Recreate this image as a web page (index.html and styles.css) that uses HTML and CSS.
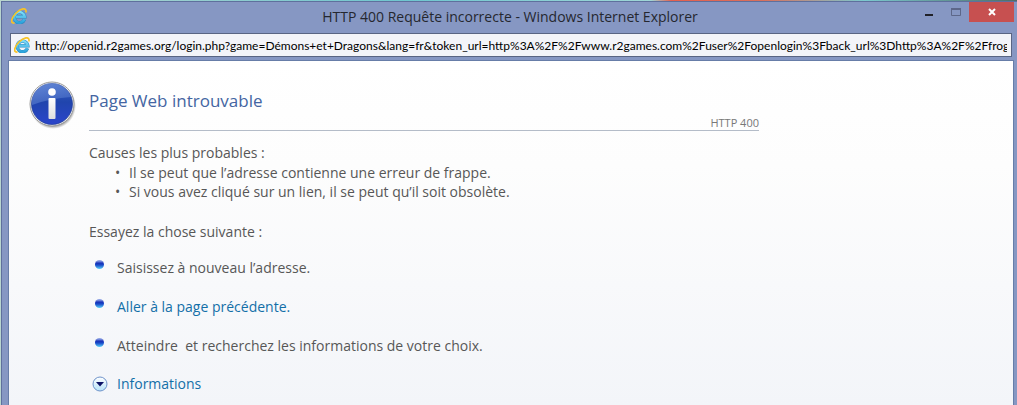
FILE: index.html
```html
<!DOCTYPE html>
<html lang="fr">
  <head>
    <meta charset="UTF-8" />
    <meta name="viewport" content="width=device-width, initial-scale=1.0" />
    <title>HTTP 400 Requête incorrecte</title>
    <link rel="stylesheet" href="styles.css">
  </head>
  <body>
    <svg class="symbols" width="0" height="0" aria-hidden="true">
      <defs>
        <linearGradient id="eBlue" x1="0" y1="0" x2="0" y2="1">
          <stop offset="0" stop-color="#7fdcf8" />
          <stop offset="1" stop-color="#2ba3dd" />
        </linearGradient>
        <symbol id="ie" viewBox="0 0 16 16">
          <path d="M13.500 11.300A5.300 5.300 0 1 1 13.800 8.800H5" fill="none" stroke="#2b8abf" stroke-width="3.4" />
          <path d="M13.500 11.300A5.300 5.300 0 1 1 13.800 8.800H5" fill="none" stroke="url(#eBlue)" stroke-width="2.5" />
          <path d="M3 15C-1 15.500 .5 9.500 5 5C9.500 .5 15.500-1 15 3.800" fill="none" stroke="#f7c327" stroke-width="1.700" stroke-linecap="round" />
        </symbol>
      </defs>
    </svg>

    <div class="window">
      <header class="titlebar">
        <svg class="ie-icon"><use href="#ie" /></svg>
        <h1>HTTP 400 Requête incorrecte - Windows Internet Explorer</h1>
        <div class="controls">
          <button class="min" aria-label="Réduire">
            <svg width="8" height="2"><path d="M0 0h8v2H0z" fill="#202128" /></svg>
          </button>
          <button class="max" aria-label="Agrandir">
            <svg width="10" height="8"><path d="M.5 1h9v6.500h-9z" fill="none" stroke="#5d6789" /><path d="M0 0h10v2H0z" fill="#5d6789" /></svg>
          </button>
          <button class="close" aria-label="Fermer">
            <svg width="8" height="8"><path d="M1 1l6 6M7 1l-6 6" stroke="#fff" stroke-width="2" /></svg>
          </button>
        </div>
      </header>

      <div class="address">
        <svg class="ie-icon"><use href="#ie" /></svg>
        <input type="text" aria-label="Adresse" value="http://openid.r2games.org/login.php?game=Démons+et+Dragons&amp;lang=fr&amp;token_url=http%3A%2F%2Fwww.r2games.com%2Fuser%2Fopenlogin%3Fback_url%3Dhttp%3A%2F%2Ffrogames" />
      </div>

      <main class="page">
        <svg class="info" viewBox="0 0 48 48" aria-hidden="true">
          <defs>
            <linearGradient id="ball" x1="0" y1="0" x2="0" y2="1">
              <stop offset="0" stop-color="#3c65c4" />
              <stop offset=".45" stop-color="#2045ad" />
              <stop offset="1" stop-color="#2b45cb" />
            </linearGradient>
            <linearGradient id="shine" x1="0" y1="0" x2="1" y2="1">
              <stop offset="0" stop-color="#8baae8" stop-opacity=".5" />
              <stop offset="1" stop-color="#6f94de" stop-opacity=".3" />
            </linearGradient>
            <radialGradient id="shade">
              <stop offset=".86" stop-color="#555" stop-opacity=".6" />
              <stop offset="1" stop-color="#777" stop-opacity="0" />
            </radialGradient>
            <linearGradient id="stem" x1="0" y1="0" x2="0" y2="1">
              <stop offset="0" stop-color="#fff" />
              <stop offset="1" stop-color="#dedede" />
            </linearGradient>
          </defs>
          <circle cx="24" cy="25" r="23" fill="url(#shade)" />
          <circle cx="23" cy="23" r="22" fill="#f6f6f6" stroke="#999" />
          <circle cx="23" cy="23" r="20.500" fill="url(#ball)" stroke="#1e3990" stroke-width=".7" />
          <path d="M3 24A20 20 0 0 1 42 16Q22 17 3 24z" fill="url(#shine)" />
          <circle cx="23" cy="11" r="3.800" fill="#fff" />
          <rect x="19.500" y="17" width="7" height="21" rx="1" fill="url(#stem)" />
        </svg>

        <div class="content">
          <h2>Page Web introuvable</h2>
          <div class="code">HTTP 400</div>

          <p>Causes les plus probables :</p>
          <ul class="causes">
            <li>Il se peut que l’adresse contienne une erreur de frappe.</li>
            <li>Si vous avez cliqué sur un lien, il se peut qu’il soit obsolète.</li>
          </ul>

          <p>Essayez la chose suivante :</p>
          <ul class="actions">
            <li>Saisissez à nouveau l’adresse.</li>
            <li><a href="#">Aller à la page précédente.</a></li>
            <li>Atteindre&nbsp; et recherchez les informations de votre choix.</li>
          </ul>

          <a class="more" href="#">
            <svg width="16" height="16" viewBox="0 0 16 16">
              <defs>
                <linearGradient id="disc" x1="0" y1="0" x2="0" y2="1">
                  <stop offset="0" stop-color="#fff" />
                  <stop offset="1" stop-color="#b5e2f8" />
                </linearGradient>
              </defs>
              <circle cx="8" cy="8" r="7" fill="url(#disc)" stroke="#6f93ca" />
              <path d="M4 6h8L8 10.500z" fill="#0b1266" />
            </svg>
            Informations
          </a>
        </div>
      </main>
    </div>
  </body>
</html>
```
FILE: styles.css
```css
html {
  height: 100%;
}
body {
  box-sizing: border-box;
  min-height: 100%;
  margin: 0;
  padding: 1px 0 0 1px;
  display: flex;
  background: linear-gradient(90deg, #b9d5cf 0%, #6fc6cf 40%, #9fd6d6 64%, #e4604f 66%, #d8705c 75%, #7cc9cf 85%, #4d6d66 100%);
  font-family: "Open Sans", "Noto Sans", sans-serif;
  font-size: 14px;
  color: #575757;
}

.symbols {
  position: absolute;
}

/* window frame */
.window {
  flex: 1;
  min-width: 0;
  display: flex;
  flex-direction: column;
  padding-right: 3px;
  background: #8697c3;
  border: solid #5f709d;
  border-width: 1px 0 0 1px;
}

.titlebar {
  display: grid;
  grid-template-columns: 1fr auto 1fr;
  height: 31px;
}
.titlebar h1 {
  margin: 0;
  padding-left: 4px;
  font-size: 14px;
  font-weight: 400;
  line-height: 29px;
  color: #25272f;
}
.ie-icon {
  width: 16px;
  height: 16px;
  flex: none;
}
.titlebar .ie-icon {
  margin: 6px 9px;
}

.controls {
  display: flex;
  justify-content: flex-end;
  align-items: flex-start;
}
.controls button {
  display: flex;
  align-items: center;
  justify-content: center;
  width: 27px;
  height: 20px;
  padding: 0;
  border: 0;
  background: none;
}
.controls .min {
  padding-top: 5px;
}
.controls .close {
  width: 45px;
  background: #c75050;
}

/* address bar */
.address {
  box-sizing: border-box;
  display: flex;
  align-items: center;
  gap: 5px;
  height: 24px;
  margin: 0 2px 3px 8px;
  padding: 0 4px 0 3px;
  background: #f3f4f9;
  border: 1px solid #596583;
}
.address input {
  flex: 1;
  min-width: 0;
  padding: 0;
  border: 0;
  outline: 0;
  background: none;
  font: 12px Lato, "Open Sans", sans-serif;
  color: #000;
}

/* error page */
.page {
  flex: 1;
  display: flex;
  gap: 12px;
  margin-left: 6px;
  padding: 20px 20px 12px;
  border: solid #677da8;
  border-width: 1px 1px 0;
  background: linear-gradient(#fff, #fdfdfd 30%, #f3f5f9);
}
.info {
  width: 48px;
  height: 48px;
  flex: none;
}
.content {
  flex: 1;
  max-width: 670px;
}

h2 {
  margin: 0;
  padding-top: 6px;
  font-size: 17px;
  font-weight: 400;
  line-height: 28px;
  color: #4465a2;
}
.code {
  margin-bottom: 12px;
  border-bottom: 1px solid #b4bcc8;
  font-size: 11px;
  line-height: 15px;
  text-align: right;
  color: #787878;
}

p {
  margin: 0;
  line-height: 20px;
}
ul {
  margin: 0;
  padding: 0;
  list-style: none;
}
a {
  color: #136fa8;
  text-decoration: none;
}

.causes {
  margin: 0 0 21px;
}
.causes li {
  display: flex;
  line-height: 19px;
}
.causes li::before {
  content: "•";
  width: 14px;
  padding-left: 26px;
}

.actions {
  margin-top: 16px;
}
.actions li {
  display: flex;
  gap: 13px;
  height: 39px;
  padding-left: 6px;
  line-height: 20px;
}
.actions li::before {
  content: "";
  width: 9px;
  height: 9px;
  margin-top: 2px;
  border-radius: 50%;
  background: linear-gradient(#8ea2e4 10%, #1730b8 35%, #1748c8 55%, #5cd2fa);
}

.more {
  display: flex;
  align-items: center;
  gap: 9px;
  padding-left: 3px;
  line-height: 18px;
}
```
